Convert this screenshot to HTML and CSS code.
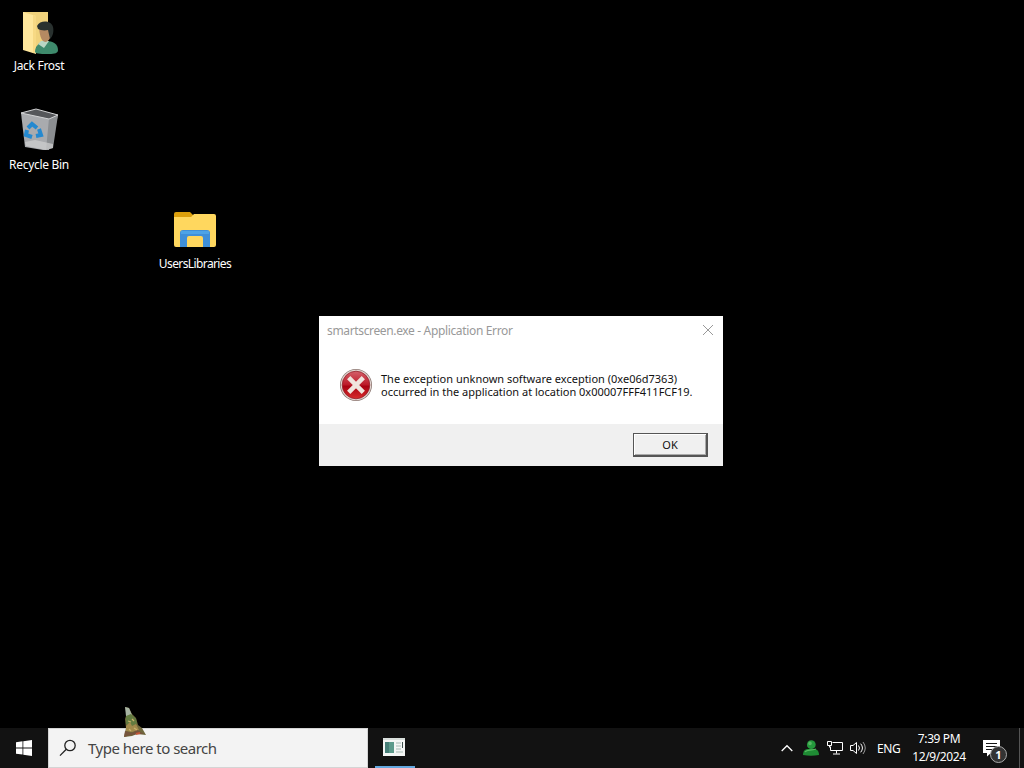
FILE: index.html
```html
<!DOCTYPE html>
<html lang="en">
<head>
    <meta charset="UTF-8">
    <meta name="viewport" content="width=device-width, initial-scale=1.0">
    <title>Desktop</title>
    <link rel="stylesheet" href="styles.css">
</head>
<body>
    <main class="desktop">
        <div class="shortcut shortcut-user">
            <svg width="48" height="48" viewBox="0 0 48 48">
                <path d="M8 3h25v35H12z" fill="#f0d27c"/>
                <path d="M8 3l13 4v38L8 41z" fill="#ffe79c"/>
                <path d="M21 7v36l-3 1V6z" fill="#f7d984"/>
                <path d="M20 43c0-6 4-10 11-11 7 0 12 3 12 9 0 3-3 4-9 4s-13 0-14-2z" fill="#3e8a6c"/>
                <path d="M23 35l3-3 8 0-5 7z" fill="#b9d6c4"/>
                <path d="M24 19c0-4 10-5 12 0 1 5 0 12-5 14-4 0-6-4-7-14z" fill="#b58a62"/>
                <path d="M22 17c3-6 14-6 16 1 1 4 0 9-3 12l-2-9c-4 1-8 0-10-1z" fill="#29312f"/>
            </svg>
            <span>Jack Frost</span>
        </div>

        <div class="shortcut shortcut-bin">
            <svg width="48" height="48" viewBox="0 0 48 48">
                <path d="M6 8l4 34 18 3h6l9-35-22-5z" fill="#a9abae"/>
                <path d="M34 13l9-3-5 33-7 2z" fill="#8b8e91"/>
                <path d="M6 8l15-4 22 6-9 4z" fill="#55575a" stroke="#d2d3d4"/>
                <path d="M10 37l10-2 18 4v4l-7 2-20-4z" fill="#d0d0d0" opacity=".7"/>
                <g fill="none" stroke="#2489d0" stroke-width="4">
                    <path d="M13 23l4-4 5 4"/>
                    <path d="M24 24l2 6-5 1"/>
                    <path d="M17 32l-6-2 1-5"/>
                </g>
            </svg>
            <span>Recycle Bin</span>
        </div>

        <div class="shortcut shortcut-libraries">
            <svg width="48" height="48" viewBox="0 0 48 48">
                <path d="M3 7q0-2 2-2h14l3 3v6H3z" fill="#dc9f0c"/>
                <path d="M3 10h17l3-3h20q2 0 2 2v29q0 2-2 2H5q-2 0-2-2z" fill="#ffd75e"/>
                <path d="M9 26q0-3 3-3h24q3 0 3 3v14h-7V31q0-2-2-2H18q-2 0-2 2v9H9z" fill="#3f8fd8"/>
                <path d="M10 24h28v3H10z" fill="#4da3e6"/>
            </svg>
            <span>UsersLibraries</span>
        </div>

        <section class="dialog">
            <header class="dialog-title">
                <span class="title-text">smartscreen.exe - Application Error</span>
                <svg class="close" width="12" height="12" viewBox="0 0 12 12"><path d="M1 1l10 10M11 1L1 11" stroke="#999"/></svg>
            </header>
            <div class="dialog-body">
                <svg width="34" height="34" viewBox="0 0 34 34">
                    <defs>
                        <linearGradient id="red" x1="0" y1="0" x2="0" y2="1">
                            <stop offset="0" stop-color="#d4606a"/>
                            <stop offset=".48" stop-color="#bd1c2a"/>
                            <stop offset=".55" stop-color="#a90312"/>
                            <stop offset="1" stop-color="#d82c2c"/>
                        </linearGradient>
                    </defs>
                    <circle cx="17" cy="17" r="16" fill="#8e7974"/>
                    <circle cx="17" cy="17" r="15.2" fill="#e2d6d1"/>
                    <circle cx="17" cy="17" r="13.8" fill="url(#red)" stroke="#932029" stroke-width=".8"/>
                    <path d="M9.700 9.700l14.600 14.600M24.300 9.700l-14.600 14.600" stroke="#f0e5de" stroke-width="4.6"/>
                </svg>
                <p class="message">
                    <span class="line-one">The exception unknown software exception (0xe06d7363)</span><br>
                    <span class="line-two">occurred in the application at location 0x00007FFF411FCF19.</span>
                </p>
            </div>
            <footer class="dialog-footer">
                <button>OK</button>
            </footer>
        </section>
    </main>

    <footer class="taskbar">
        <div class="start">
            <svg width="16" height="16" viewBox="0 0 16 16"><path d="M0 2.2l6.5-.9v6.2H0zM7.3 1.2L16 0v7.5H7.3zM0 8.4h6.5v6.2L0 13.7zM7.3 8.4H16V16l-8.7-1.2z" fill="#fff"/></svg>
        </div>
        <div class="search">
            <svg width="18" height="18" viewBox="0 0 18 18" fill="none" stroke="#222" stroke-width="1.3"><circle cx="11" cy="6.5" r="5.2"/><path d="M7.3 10.3L1 16.6"/></svg>
            <span>Type here to search</span>
        </div>
        <div class="task">
            <svg width="22" height="18" viewBox="0 0 22 18">
                <path d="M0 0h22v18H0z" fill="#f4f6f5"/>
                <path d="M0 0h22v2H0z" fill="#d9dfdc"/>
                <path d="M2 4h9v11H2z" fill="#5c9a8b"/>
                <path d="M2 4h4v11H2z" fill="#477f78"/>
                <path d="M13 5h5M13 8h5M13 11h5M13 14h7" stroke="#a5bab4"/>
                <path d="M19.5 4v6" stroke="#40514e"/>
            </svg>
        </div>

        <div class="tray">
            <svg class="chevron" width="12" height="8" viewBox="0 0 12 8" fill="none" stroke="#fff" stroke-width="1.3"><path d="M.7 7L6 1.7 11.3 7"/></svg>
            <svg class="buddy" width="16" height="16" viewBox="0 0 16 16">
                <circle cx="8.3" cy="4.7" r="4.4" fill="#24993c"/>
                <path d="M0 15c0-4 2-6 5-6h6c3 0 5 2 5 6q-8 1.5-16 0z" fill="#1f8b34"/>
                <path d="M2 12c2-3 5-1 11-3" stroke="#59bd63" stroke-width="1.2" fill="none"/>
                <circle cx="7" cy="3.4" r="1.8" fill="#56b763"/>
            </svg>
            <svg class="network" width="17" height="14" viewBox="0 0 17 14" fill="none" stroke="#fff"><path d="M5.500 1.500h10v8H3.500V5.500M9.500 9.500v3M6 13h7M.5.5h4v4h-4zM2.500 4.500v2"/></svg>
            <svg class="volume" width="17" height="14" viewBox="0 0 17 14" fill="none" stroke="#fff"><path d="M.5 4.500h2.500l3.500-3v11l-3.500-3H.5zM8.500 4.500q2 2.500 0 5M10.700 2.700q3.500 4.300 0 8.600"/><path d="M13 1q4.500 6 0 12" stroke="#999"/></svg>
            <span class="language">ENG</span>
            <div class="clock">
                <span class="time">7:39 PM</span>
                <span class="date">12/9/2024</span>
            </div>
            <div class="notifications">
                <svg width="17" height="17" viewBox="0 0 17 17"><path d="M0 0h17v13H8l-4 3.500V13H0z" fill="#fff"/><path d="M3 3.500h11M3 6.500h11M3 9.500h8" stroke="#161616"/></svg>
                <span class="badge">1</span>
            </div>
            <div class="show-desktop"></div>
        </div>
    </footer>

    <!-- holiday mouse pointer -->
    <svg class="pointer" width="26" height="32" viewBox="0 0 26 32">
        <path d="M3 1l4 1 3 6 4 4 2 7 4 3 4 7-9-1-5 2-8 1 2-9-1-9 2-6z" fill="#6f673c"/>
        <path d="M3 1l4 1 3 7-3 3-3-2z" fill="#a7b4a3"/>
        <path d="M4 10l5-2 5 5 1 5-5 2-6-2z" fill="#637b40"/>
        <path d="M4 20l4-4 2 4 4-2 3 6-7 2-6-1z" fill="#a28a4c"/>
        <path d="M3 25l7 2 5-3 7 4-7 0-6 1-7 2z" fill="#76543c"/>
        <path d="M6 15l3 1M10 13l2 2M12 22l3 2M7 23l2 2" stroke="#c9b26b" stroke-width="1.3"/>
        <path d="M14 28l4-1" stroke="#c45739" stroke-width="2"/>
    </svg>
</body>
</html>
```
FILE: styles.css
```css
* {
    box-sizing: border-box;
}
body {
    margin: 0;
    height: 100vh;
    display: flex;
    flex-direction: column;
    overflow: hidden;
    background-color: #000;
    color: #fff;
    font-family: "Noto Sans", "Open Sans", sans-serif;
    font-size: 12px;
}
svg {
    display: block;
    flex-shrink: 0;
}
.desktop {
    position: relative;
    flex: 1;
}

/* Desktop icons */
.shortcut {
    position: absolute;
    width: 78px;
    display: flex;
    flex-direction: column;
    align-items: center;
    line-height: 16px;
    white-space: nowrap;
}
.shortcut span {
    margin-top: 1px;
    letter-spacing: -0.3px;
}
.shortcut-user {
    left: 0;
    top: 9px;
}
.shortcut-bin {
    left: 0;
    top: 105px;
}
.shortcut-bin span {
    margin-top: 4px;
}
.shortcut-libraries {
    left: 156px;
    top: 207px;
}
.shortcut-libraries span {
    letter-spacing: -0.6px;
}

/* Error dialog */
.dialog {
    position: absolute;
    left: 319px;
    top: 316px;
    width: 404px;
    height: 150px;
    display: flex;
    flex-direction: column;
    background-color: #fff;
    color: #111;
}
.dialog-title {
    height: 28px;
    padding: 0 9px 0 8px;
    display: flex;
    align-items: center;
    justify-content: space-between;
    color: #999;
}
.title-text {
    letter-spacing: -0.35px;
}
.dialog-body {
    flex: 1;
    display: flex;
    align-items: flex-start;
    gap: 8px;
    padding: 24px 0 0 20px;
}
.message {
    margin: 4px 0 0;
    font-size: 11px;
    line-height: 13px;
    white-space: nowrap;
}
.dialog-footer {
    height: 42px;
    padding: 9px 15px 0 0;
    display: flex;
    justify-content: flex-end;
    align-items: flex-start;
    background-color: #f0f0f0;
}
button {
    width: 75px;
    height: 24px;
    padding: 0;
    border: 1px solid #555;
    border-right: 2px solid #555;
    border-bottom: 2px solid #555;
    box-shadow: inset 1px 1px #fff, inset -1px -1px #aaa;
    background-color: #f0f0f0;
    color: #111;
    font-family: inherit;
    font-size: 11px;
}

/* Taskbar */
.taskbar {
    height: 40px;
    display: flex;
    background-color: #121212;
}
.start {
    width: 48px;
    display: flex;
    align-items: center;
    justify-content: center;
}
.search {
    width: 320px;
    display: flex;
    align-items: center;
    gap: 11px;
    padding-left: 10px;
    background-color: #f3f3f3;
    border: 1px solid #d4d4d4;
    color: #444;
    font-size: 15px;
}
.search span {
    letter-spacing: -0.5px;
}
.task {
    width: 40px;
    margin-left: 7px;
    padding-right: 2px;
    display: flex;
    align-items: center;
    justify-content: center;
    border-bottom: 2px solid #64a9e0;
}
.tray {
    margin-left: auto;
    display: flex;
    align-items: center;
}
.buddy {
    margin-left: 10px;
}
.network {
    margin-left: 8px;
}
.volume {
    margin-left: 6px;
}
.language {
    width: 24px;
    margin-left: 10px;
    letter-spacing: -0.4px;
}
.clock {
    width: 54px;
    margin-left: 11px;
    display: flex;
    flex-direction: column;
    align-items: center;
    line-height: 18px;
}
.time,
.date {
    letter-spacing: -0.4px;
}
.notifications {
    position: relative;
    margin-left: 17px;
}
.badge {
    position: absolute;
    left: 7px;
    top: 6px;
    width: 17px;
    height: 17px;
    border: 1px solid #aaa;
    border-radius: 50%;
    background-color: #333;
    font-size: 11px;
    font-weight: bold;
    line-height: 15px;
    text-align: center;
}
.show-desktop {
    width: 5px;
    height: 40px;
    margin-left: 19px;
    border-left: 1px solid #555;
}
.pointer {
    position: absolute;
    left: 122px;
    top: 706px;
}
```
